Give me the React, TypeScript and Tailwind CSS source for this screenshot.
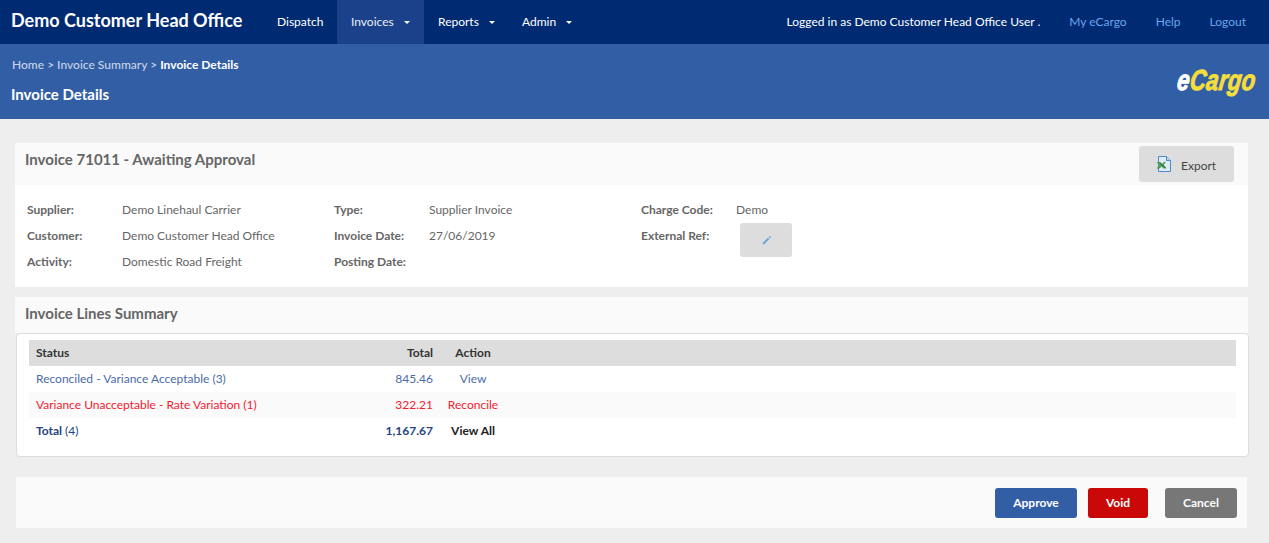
import React from "react";

function Caret() {
  return <span className="inline-block w-0 h-0 border-x-[3px] border-x-transparent border-t-[3px] border-t-white" />;
}

function ExcelIcon() {
  return (
    <svg width="16" height="17" viewBox="0 0 16 17" className="shrink-0">
      <path d="M2.5 0.5H10.5L14.5 4.5V15.5H2.5Z" fill="#dfeaf6" stroke="#4a8ccc" />
      <path d="M10.5 0.5V4.5H14.5" fill="#bcd5ee" stroke="#4a8ccc" />
      <path d="M0.5 6H4L6 8L8 6H10L7.5 9L10.5 12.5H7.5L5.5 10.5L3.5 12.5H0.5L3.5 9Z" fill="#4f9a52" />
      <path d="M4 6.5L6.5 9.5M7 9L9.5 12" fill="none" stroke="#2c6b36" strokeWidth="1" />
    </svg>
  );
}

function Field({ label, value, w }: { label: string; value?: string; w: string }) {
  return (
    <div className="flex h-[26px] items-center">
      <span className={`${w} shrink-0 font-bold text-[#666]`}>{label}</span>
      {value && <span className="text-[#666]">{value}</span>}
    </div>
  );
}

function Row({
  status,
  count,
  total,
  action,
  cls,
  actionCls,
  totalCls,
}: {
  status: string;
  count: string;
  total: string;
  action: string;
  cls: string;
  actionCls: string;
  totalCls?: string;
}) {
  return (
    <div className={`flex h-[26px] items-center ${cls}`}>
      <span className={`w-[324px] pl-[7px] ${totalCls ?? ""}`}>
        {status} <span className="font-normal">{count}</span>
      </span>
      <span className={`w-[80px] text-right ${totalCls ?? ""}`}>{total}</span>
      <span className={`w-[80px] text-center ${actionCls}`}>{action}</span>
    </div>
  );
}

export default function App() {
  return (
    <div className="min-h-[543px] bg-[#eeeeee] text-[12px] font-['Lato',sans-serif] overflow-hidden">
      <nav className="flex h-[44px] bg-[#002a72] text-white items-stretch">
        <div className="w-[277px] pl-[11px] flex items-center text-[18px] font-bold -mt-[3px]">Demo Customer Head Office</div>
        <div className="w-[60px] flex items-center">Dispatch</div>
        <div className="w-[87px] flex items-center gap-[10px] pl-[14px] bg-[#1b418a] text-[#e8edf5]">
          Invoices <Caret />
        </div>
        <div className="w-[98px] pl-[14px] flex items-center gap-[10px]">
          Reports <Caret />
        </div>
        <div className="flex items-center gap-[10px]">
          Admin <Caret />
        </div>
        <div className="ml-auto flex items-center pr-[23px]">
          <span className="mr-[29px]">Logged in as Demo Customer Head Office User .</span>
          <span className="mr-[29px] text-[#6ea4ea]">My eCargo</span>
          <span className="mr-[29px] text-[#6ea4ea]">Help</span>
          <span className="text-[#6ea4ea]">Logout</span>
        </div>
      </nav>

      <header className="h-[75px] bg-[#325ea5] relative text-white">
        <div className="pl-[12px] pt-[13px] leading-[15px] font-medium text-[#c7d3e8]">
          Home &gt; Invoice Summary &gt; <span className="font-bold text-white">Invoice Details</span>
        </div>
        <div className="pl-[11px] pt-[12px] text-[15px] font-bold leading-[20px]">Invoice Details</div>
        <div className="absolute right-[13px] top-[18px] font-['Liberation_Sans',sans-serif] font-bold italic text-[29px] leading-[36px] tracking-[0.5px] -skew-x-[10deg] origin-right scale-x-[0.76] [-webkit-text-stroke:1px_#f3de3c] text-[#f3de3c]">
          <span className="text-white [-webkit-text-stroke:1px_#ffffff]">e</span>Cargo
        </div>
      </header>

      <main className="px-[15px] pt-[24px]">
        <section className="w-[1233px]">
          <div className="h-[42px] bg-[#fafafa] flex justify-between pl-[10px] pr-[14px]">
            <h2 className="text-[15px] font-bold text-[#666] pt-[6px] leading-[20px]">Invoice 71011 - Awaiting Approval</h2>
            <button className="mt-[3px] h-[36px] w-[95px] rounded-[3px] bg-[#dddddd] flex items-center pl-[17px] pt-[4px] text-[#444]">
              <span className="-mt-[4px]"><ExcelIcon /></span>
              <span className="ml-[9px]">Export</span>
            </button>
          </div>
          <div className="h-[102px] bg-white pl-[12px] pt-[12px] flex">
            <div className="w-[307px]">
              <Field w="w-[95px]" label="Supplier:" value="Demo Linehaul Carrier" />
              <Field w="w-[95px]" label="Customer:" value="Demo Customer Head Office" />
              <Field w="w-[95px]" label="Activity:" value="Domestic Road Freight" />
            </div>
            <div className="w-[307px]">
              <Field w="w-[95px]" label="Type:" value="Supplier Invoice" />
              <Field w="w-[95px]" label="Invoice Date:" value="27/06/2019" />
              <Field w="w-[95px]" label="Posting Date:" />
            </div>
            <div>
              <Field w="w-[95px]" label="Charge Code:" value="Demo" />
              <div className="flex items-start">
                <span className="w-[99px] shrink-0 font-bold text-[#666] leading-[26px]">External Ref:</span>
                <button className="h-[34px] w-[52px] rounded-[3px] bg-[#dddddd] flex items-center justify-center">
                  <svg width="10" height="10" viewBox="0 0 10 10" className="ml-[2px]">
                    <path d="M0.5 9.5L1 7.5L5.8 2.7L7.3 4.2L2.5 9Z" fill="#6ea6d8" />
                    <path d="M6.6 1.9L7.6 0.9L9.1 2.4L8.1 3.4Z" fill="#6ea6d8" />
                  </svg>
                </button>
              </div>
            </div>
          </div>
        </section>

        <section className="w-[1233px] mt-[10px]">
          <div className="h-[36px] bg-[#fafafa] pl-[10px] pt-[6px] text-[15px] font-bold text-[#666] leading-[20px]">Invoice Lines Summary</div>
          <div className="w-[1233px] ml-[1px] h-[124px] bg-white border border-[#dddddd] rounded-[4px] px-[12px] pt-[6px]">
            <div className="flex h-[26px] items-center bg-[#dddddd] font-bold text-[#333]">
              <span className="w-[324px] pl-[7px]">Status</span>
              <span className="w-[80px] text-right">Total</span>
              <span className="w-[80px] text-center">Action</span>
            </div>
            <Row status="Reconciled - Variance Acceptable" count="(3)" total="845.46" action="View" cls="text-[#4a6ca6]" actionCls="text-[#4a6ca6]" />
            <Row status="Variance Unacceptable - Rate Variation" count="(1)" total="322.21" action="Reconcile" cls="bg-[#fafafa] text-[#f5182f]" actionCls="text-[#f5182f]" />
            <Row status="Total" count="(4)" total="1,167.67" action="View All" cls="text-[#25457f]" actionCls="font-bold text-[#222]" totalCls="font-bold" />
          </div>
        </section>

        <section className="w-[1231px] ml-[1px] mt-[20px] h-[51px] bg-[#fafafa] flex items-center justify-end pr-[10px] text-white font-bold">
          <button className="h-[30px] w-[82px] rounded-[3px] bg-[#325ea5]">Approve</button>
          <button className="h-[30px] w-[60px] ml-[11px] rounded-[3px] bg-[#cb0808]">Void</button>
          <button className="h-[30px] w-[72px] ml-[17px] rounded-[3px] bg-[#777777]">Cancel</button>
        </section>
      </main>
    </div>
  );
}
